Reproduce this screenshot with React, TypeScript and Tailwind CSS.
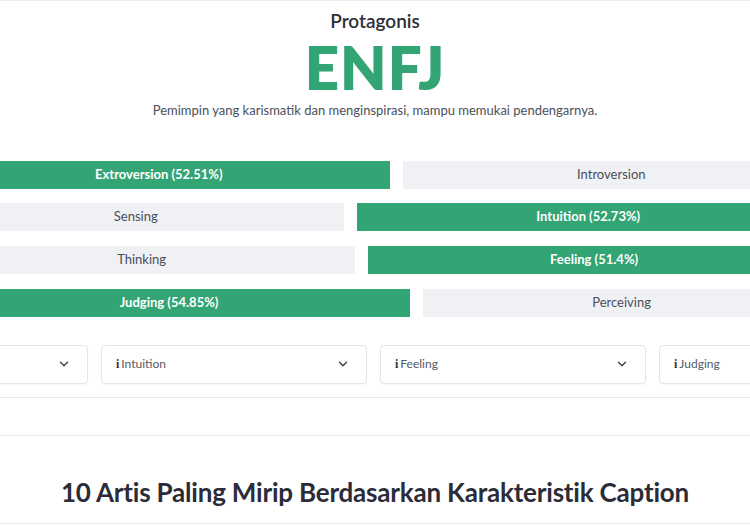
import { ChevronDown } from "lucide-react";

const traits = [
  { left: "Extroversion", right: "Introversion", value: 52.51, leftWins: true },
  { left: "Sensing", right: "Intuition", value: 52.73, leftWins: false },
  { left: "Thinking", right: "Feeling", value: 51.4, leftWins: false },
  { left: "Judging", right: "Perceiving", value: 54.85, leftWins: true },
];

const dropdowns = ["Extroversion", "Intuition", "Feeling", "Judging"];

const Bar = ({ label, active, pct }: { label: string, active: boolean, pct: number }) => (
  <div
    style={{ flexGrow: pct, flexBasis: 0 }}
    className={`h-[28px] flex items-center justify-center text-[13px] ${active ? "bg-[#33a474] text-white font-bold" : "bg-[#f0f1f5] text-[#4a4e59]"}`}
  >
    {active ? `${label} (${pct}%)` : label}
  </div>
)

export default function App() {
  return (
    <div className="w-[750px] h-[525px] overflow-hidden bg-white border-t border-[#eeeeee]" style={{ fontFamily: "Lato, 'Open Sans', sans-serif" }}>
      <div className="flex flex-col items-center">
        <p className="mt-[8px] text-[19px] font-semibold text-[#2f2f38] leading-[24px]">Protagonis</p>
        <h1 className="text-[60px] font-extrabold text-[#33a474] leading-[62px] tracking-[1px] mt-[3px]">ENFJ</h1>
        <p className="text-[13px] text-[#4b4f5a] mt-[3px]">Pemimpin yang karismatik dan menginspirasi, mampu memukai pendengarnya.</p>
      </div>

      <div className="w-[892px] ml-[-72px] mt-[40px] flex flex-col gap-[14.7px]">
        {traits.map((t) => (
          <div key={t.left} className="flex gap-[13px]">
            <Bar label={t.left} active={t.leftWins} pct={t.leftWins ? t.value : +(100 - t.value).toFixed(2)} />
            <Bar label={t.right} active={!t.leftWins} pct={t.leftWins ? +(100 - t.value).toFixed(2) : t.value} />
          </div>
        ))}
      </div>

      <div className="w-[1103px] ml-[-178px] mt-[28px] grid grid-cols-4 gap-[13px]">
        {dropdowns.map((d) => (
          <div key={d} className="h-[39px] border border-[#e4e5e8] rounded-[4px] shadow-[0_1px_2px_rgba(0,0,0,0.04)] flex items-center justify-between pl-[14px] pr-[16px] text-[12px] text-[#555a66]">
            <span className="flex items-center gap-[2px]">
              <span className="font-bold text-[#333] text-[12px]" style={{ fontFamily: "'Liberation Serif', serif" }}>i</span>
              {d}
            </span>
            <ChevronDown size={14} strokeWidth={2.5} className="text-[#444]" />
          </div>
        ))}
      </div>

      <div className="mt-[13px] border-t border-[#e6e6e6] h-[39px] border-b"></div>

      <div className="h-[88px] pt-[40px] flex justify-center border-b border-[#eeeeee]">
        <h2 className="text-[26px] leading-[32px] font-bold text-[#2b2c38] tracking-[-0.2px]">10 Artis Paling Mirip Berdasarkan Karakteristik Caption</h2>
      </div>
    </div>
  )
}
